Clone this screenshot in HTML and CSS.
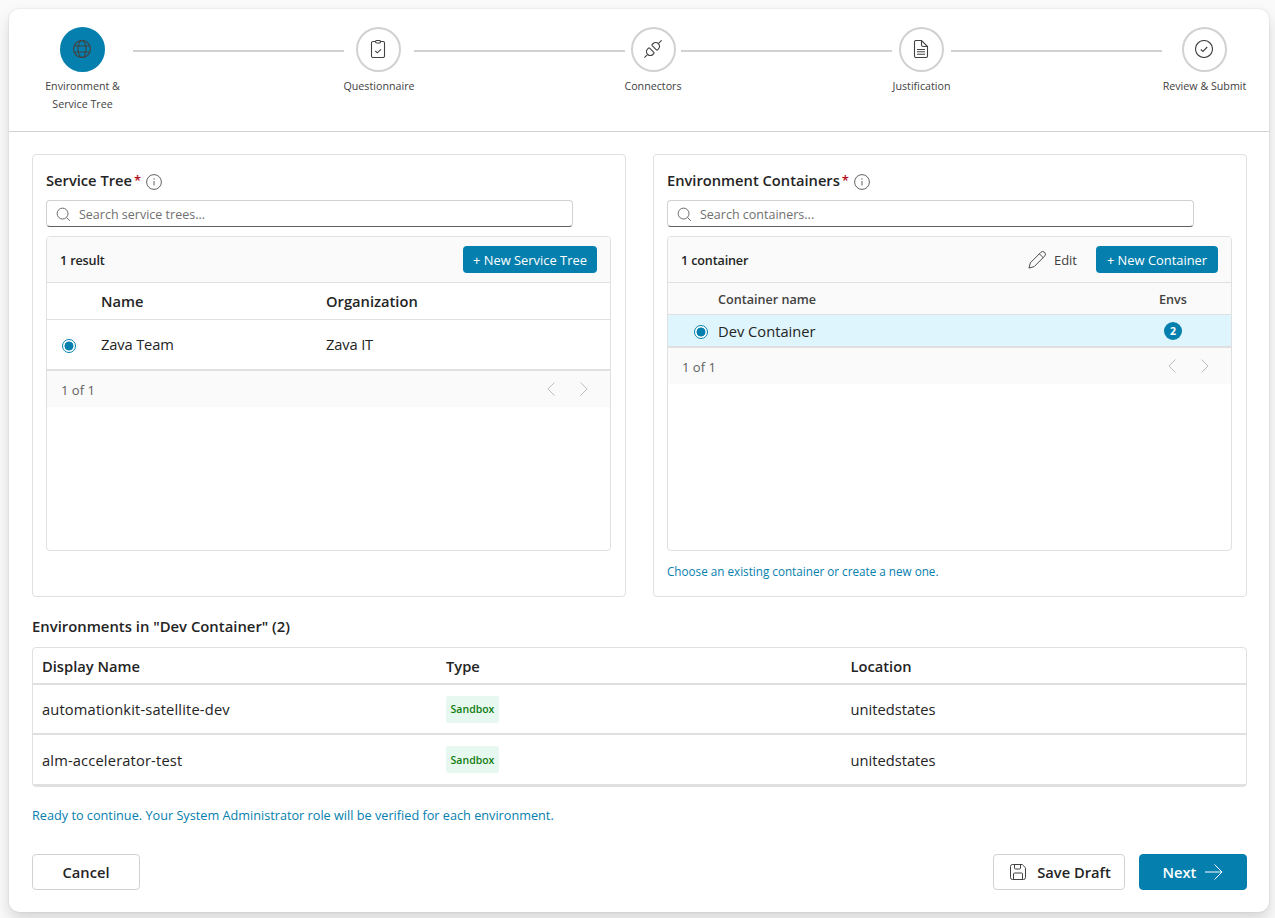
FILE: index.html
```html
<!DOCTYPE html>
<html lang="en">
<head>
    <meta charset="UTF-8">
    <title>Environment &amp; Service Tree</title>
    <link rel="stylesheet" href="styles.css">
</head>
<body>
    <div id="page-container">
        <div class="stepper">
            <div class="step step-environment active">
                <div class="circle">
                    <svg class="icon" viewBox="0 0 18 18"><circle cx="9" cy="9" r="8.5"/><ellipse cx="9" cy="9" rx="4" ry="8.5"/><path d="M1 6h16M1 12h16"/></svg>
                </div>
                <div class="step-label">Environment &amp;<br>Service Tree</div>
            </div>
            <div class="line"></div>
            <div class="step step-questionnaire">
                <div class="circle">
                    <svg class="icon" viewBox="0 0 18 18"><path d="M6.5 1.500H4A1.500 1.500 0 0 0 2.500 3v13A1.500 1.500 0 0 0 4 17.500h10a1.500 1.500 0 0 0 1.500-1.500V3A1.500 1.500 0 0 0 14 1.500h-2.500"/><rect x="6.500" y=".5" width="5" height="2.500" rx="1.200"/><path d="M6.300 11l2 1.800L12 9.300"/></svg>
                </div>
                <div class="step-label">Questionnaire</div>
            </div>
            <div class="line"></div>
            <div class="step step-connectors">
                <div class="circle">
                    <svg class="icon" viewBox="0 0 18 18"><path d="M.4 17.600L3.200 14.800M14.800 3.200L17.600.4M4.500 8.200a.8.8 0 0 1 1.100 0l4.200 4.200a.8.8 0 0 1 0 1.100l-1 1a3.500 3.500 0 0 1-5 0l-.3-.3a3.500 3.500 0 0 1 0-5zM8.200 4.500a.8.8 0 0 0 0 1.100l4.200 4.200a.8.8 0 0 0 1.100 0l1-1a3.500 3.500 0 0 0 0-5l-.3-.3a3.500 3.500 0 0 0-5 0z"/></svg>
                </div>
                <div class="step-label">Connectors</div>
            </div>
            <div class="line"></div>
            <div class="step step-justification">
                <div class="circle">
                    <svg class="icon" viewBox="0 0 18 18"><path d="M9.500.5H4A1.500 1.500 0 0 0 2.500 2v14A1.500 1.500 0 0 0 4 17.500h10a1.500 1.500 0 0 0 1.500-1.500V6.500zM9.500.5V5A1.500 1.500 0 0 0 11 6.500h4.500M5 9.500h8M5 11.800h8M5 14.200h8"/></svg>
                </div>
                <div class="step-label">Justification</div>
            </div>
            <div class="line"></div>
            <div class="step step-review">
                <div class="circle">
                    <svg class="icon" viewBox="0 0 18 18"><circle cx="9" cy="9" r="8.500"/><path d="M5.800 9.500l2.200 2 4.200-4.500"/></svg>
                </div>
                <div class="step-label">Review &amp; Submit</div>
            </div>
        </div>

        <div class="content">
            <div class="panels">
                <div class="panel">
                    <div class="panel-title">
                        <span>Service Tree</span><span class="required">*</span>
                        <svg class="info" viewBox="0 0 16 16"><circle cx="8" cy="8" r="7.400"/><path d="M8 7v4.500"/><path d="M8 4.300v1.400"/></svg>
                    </div>
                    <div class="search">
                        <svg viewBox="0 0 16 16"><circle cx="7" cy="7" r="5.800"/><path d="M11.200 11.200l3.600 3.600"/></svg>
                        <span>Search service trees...</span>
                    </div>
                    <div class="box">
                        <div class="toolbar">
                            <span class="count">1 result</span>
                            <button class="small-button new-tree">+ New Service Tree</button>
                        </div>
                        <div class="tree-row tree-head">
                            <span></span><span>Name</span><span>Organization</span>
                        </div>
                        <div class="tree-row tree-item">
                            <span class="radio"></span><span>Zava Team</span><span>Zava IT</span>
                        </div>
                        <div class="pager">
                            <span>1 of 1</span>
                            <div class="arrows">
                                <svg viewBox="0 0 8 14"><path d="M7.500.5L1 7l6.500 6.500"/></svg>
                                <svg viewBox="0 0 8 14"><path d="M.5.5L7 7 .5 13.500"/></svg>
                            </div>
                        </div>
                    </div>
                </div>

                <div class="panel">
                    <div class="panel-title">
                        <span>Environment Containers</span><span class="required">*</span>
                        <svg class="info" viewBox="0 0 16 16"><circle cx="8" cy="8" r="7.400"/><path d="M8 7v4.500"/><path d="M8 4.300v1.400"/></svg>
                    </div>
                    <div class="search">
                        <svg viewBox="0 0 16 16"><circle cx="7" cy="7" r="5.800"/><path d="M11.200 11.200l3.600 3.600"/></svg>
                        <span>Search containers...</span>
                    </div>
                    <div class="box">
                        <div class="toolbar">
                            <span class="count">1 container</span>
                            <div class="edit">
                                <svg viewBox="0 0 20 20"><path d="M13.500 2.500a2.800 2.800 0 0 1 4 4L6.500 17.500 1 19l1.500-5.500zM12 4l4 4"/></svg>
                                <span>Edit</span>
                            </div>
                            <button class="small-button new-container">+ New Container</button>
                        </div>
                        <div class="container-row container-head">
                            <span></span><span>Container name</span><span class="envs">Envs</span>
                        </div>
                        <div class="container-row container-item">
                            <span class="radio"></span><span>Dev Container</span><span class="badge">2</span>
                        </div>
                        <div class="pager">
                            <span>1 of 1</span>
                            <div class="arrows">
                                <svg viewBox="0 0 8 14"><path d="M7.500.5L1 7l6.500 6.500"/></svg>
                                <svg viewBox="0 0 8 14"><path d="M.5.5L7 7 .5 13.500"/></svg>
                            </div>
                        </div>
                    </div>
                    <div class="hint">Choose an existing container or create a new one.</div>
                </div>
            </div>

            <div class="env-title">Environments in "Dev Container" (2)</div>
            <div class="env-table">
                <div class="env-row env-head">
                    <span>Display Name</span><span>Type</span><span>Location</span>
                </div>
                <div class="env-row">
                    <span class="env-name">automationkit-satellite-dev</span><span class="tag">Sandbox</span><span>unitedstates</span>
                </div>
                <div class="env-row">
                    <span class="env-name">alm-accelerator-test</span><span class="tag">Sandbox</span><span>unitedstates</span>
                </div>
            </div>

            <div class="message">Ready to continue. Your System Administrator role will be verified for each environment.</div>

            <div class="buttons">
                <button class="button cancel">Cancel</button>
                <button class="button save">
                    <svg viewBox="0 0 16 16"><path d="M2.500.5h9.700l3.300 3.300v9.700a2 2 0 0 1-2 2h-11a2 2 0 0 1-2-2v-11a2 2 0 0 1 2-2zM4.500.5v3.500a1 1 0 0 0 1 1h4a1 1 0 0 0 1-1V.5M3.500 15.500V10a1 1 0 0 1 1-1h7a1 1 0 0 1 1 1v5.500"/></svg>
                    <span>Save Draft</span>
                </button>
                <button class="button next">
                    <span>Next</span>
                    <svg viewBox="0 0 18 18"><path d="M0 9h17M9.500 1.500L17 9l-7.500 7.500"/></svg>
                </button>
            </div>
        </div>
    </div>
</body>
</html>
```
FILE: styles.css
```css
* {
    box-sizing: border-box;
}

body {
    margin: 0;
    padding: 9px 6px 6px 9px;
    background-color: #fafafa;
    font-family: "Open Sans", "Noto Sans", sans-serif;
    font-size: 14.7px;
    line-height: 20px;
    color: #242424;
    overflow: hidden;
}

svg {
    fill: none;
    stroke: #424242;
    flex: none;
}

button {
    font-family: inherit;
    padding: 0;
    white-space: nowrap;
}

#page-container {
    height: 903px;
    background-color: white;
    border-radius: 10px;
    box-shadow: 0 0 2px rgba(0, 0, 0, 0.14), 0 8px 16px rgba(0, 0, 0, 0.14);
}

/* steps */
.stepper {
    display: flex;
    height: 123px;
    padding: 18px 22px 0 23px;
    border-bottom: 1px solid #d1d1d1;
}

.step {
    display: flex;
    flex-direction: column;
    align-items: center;
    white-space: nowrap;
}

.step-environment {
    width: 101px;
}

.step-questionnaire {
    width: 70px;
}

.step-questionnaire .circle {
    margin-right: 1px;
}

.step-connectors {
    width: 56px;
}

.step-justification {
    width: 59px;
}

.step-review {
    width: 85px;
}

.line {
    flex: 1;
    height: 2px;
    margin-top: 23px;
    background-color: #d1d1d1;
}

.circle {
    display: flex;
    align-items: center;
    justify-content: center;
    width: 45px;
    height: 45px;
    border: 2px solid #d1d1d1;
    border-radius: 50%;
}

.active .circle {
    background-color: #0580ae;
    border-color: #0580ae;
}

.icon {
    width: 18px;
    height: 18px;
    margin: 0 1px 1px 0;
    stroke-width: 1.1;
}

.step-label {
    margin-top: 5px;
    font-size: 10.7px;
    line-height: 18px;
    text-align: center;
    color: #424242;
}

/* panels */
.content {
    padding: 22px 22px 0 23px;
}

.panels {
    display: grid;
    grid-template-columns: 1fr 1fr;
    gap: 27px;
}

.panel {
    height: 443px;
    padding: 15px 14px 0 13px;
    border: 1px solid #e0e0e0;
    border-radius: 4px;
}

.panel-title {
    display: flex;
    align-items: center;
    height: 20px;
    font-weight: 600;
}

.required {
    width: 6px;
    margin-left: 2px;
    font-size: 13px;
    color: #b10e1c;
}

.info {
    width: 16px;
    height: 16px;
    margin: 4px 0 0 6px;
    stroke: #616161;
}

.search {
    display: flex;
    align-items: center;
    gap: 8px;
    width: 527px;
    height: 27px;
    margin-top: 10px;
    padding: 2px 9px 0;
    border: 1px solid #d1d1d1;
    border-bottom-color: #616161;
    border-radius: 4px;
    font-size: 12.5px;
    color: #707070;
}

.search span {
    padding-top: 1px;
}

.search svg {
    width: 15px;
    height: 15px;
    margin-top: -1px;
    stroke: #616161;
}

.box {
    height: 315px;
    margin-top: 9px;
    border: 1px solid #e0e0e0;
    border-radius: 4px;
    overflow: hidden;
}

.toolbar {
    display: flex;
    align-items: center;
    height: 46px;
    padding: 0 13px;
    background-color: #fafafa;
    border-bottom: 1px solid #e0e0e0;
}

.count {
    flex: 1;
    padding-top: 2px;
    font-size: 12.6px;
    font-weight: 600;
    letter-spacing: -0.15px;
}

.small-button {
    height: 27px;
    border: none;
    border-radius: 4px;
    background-color: #0580ae;
    color: white;
    font-size: 12.9px;
}

.new-tree {
    width: 134px;
}

.new-container {
    width: 122px;
}

.edit {
    display: flex;
    align-items: center;
    gap: 7px;
    margin-right: 19px;
    font-size: 13px;
    color: #424242;
}

.edit svg {
    width: 19px;
    height: 19px;
}

.tree-row {
    display: grid;
    grid-template-columns: 39px 225px 1fr;
    align-items: center;
    padding-left: 15px;
}

.tree-head {
    height: 37px;
    padding-bottom: 1px;
    border-bottom: 1px solid #e0e0e0;
    font-weight: 600;
}

.tree-item {
    height: 51px;
    padding-bottom: 2px;
    border-bottom: 2px solid #e0e0e0;
    letter-spacing: -0.15px;
}

.radio {
    width: 14px;
    height: 14px;
    border: 1px solid #0580ae;
    border-radius: 50%;
    background: radial-gradient(circle, #0580ae 4.2px, white 4.8px);
}

.tree-item .radio {
    margin-top: 5px;
}

.container-row {
    display: grid;
    grid-template-columns: 24px 1fr 60px;
    align-items: center;
    padding: 0 28px 0 26px;
}

.container-head {
    height: 32px;
    padding-top: 2px;
    background-color: #fafafa;
    border-bottom: 1px solid #e0e0e0;
    font-size: 12.6px;
    font-weight: 600;
    color: #424242;
}

.container-item {
    height: 33px;
    padding-top: 1px;
    background-color: #def5fe;
    border-bottom: 2px solid #e0e0e0;
}

.container-item .radio {
    margin-top: 2px;
}

.envs {
    text-align: center;
}

.badge {
    justify-self: center;
    width: 18px;
    height: 18px;
    border-radius: 50%;
    background-color: #0580ae;
    color: white;
    font-size: 10.5px;
    font-weight: 700;
    line-height: 18px;
    text-align: center;
}

.pager {
    display: flex;
    align-items: center;
    justify-content: space-between;
    height: 36px;
    padding: 2px 22px 0 14px;
    background-color: #fafafa;
    font-size: 13px;
    color: #616161;
}

.arrows {
    display: flex;
    gap: 25px;
}

.arrows svg {
    width: 8px;
    height: 14px;
    margin-top: -3px;
    stroke: #bdbdbd;
}

.hint {
    margin-top: 10px;
    font-size: 11.7px;
    color: #0580ae;
}

/* environments */
.env-title {
    margin-top: 19px;
    font-size: 14.85px;
    font-weight: 600;
}

.env-table {
    height: 140px;
    margin-top: 11px;
    border: 1px solid #e0e0e0;
    border-radius: 4px;
}

.env-row {
    display: grid;
    grid-template-columns: 404px 404.5px 1fr;
    align-items: center;
    height: 50px;
    padding-left: 9px;
    border-bottom: 2px solid #e0e0e0;
}

.env-head {
    height: 37px;
    padding-top: 1px;
    font-weight: 600;
}

.env-row:last-child {
    height: 51px;
    padding-top: 1px;
}

.env-name {
    letter-spacing: 0.15px;
}

.tag {
    justify-self: start;
    width: 53px;
    height: 27px;
    border-radius: 2px;
    background-color: #e7f8f1;
    color: #107c10;
    font-size: 10.5px;
    font-weight: 600;
    line-height: 26px;
    text-align: center;
}

.env-row:last-child .tag {
    margin-top: -2px;
    line-height: 28px;
}

.message {
    margin-top: 18px;
    font-size: 12.7px;
    color: #0580ae;
}

.buttons {
    display: flex;
    gap: 14px;
    margin-top: 29px;
}

.button {
    display: flex;
    align-items: center;
    justify-content: center;
    height: 36px;
    border: 1px solid #d1d1d1;
    border-radius: 4px;
    background-color: white;
    color: #242424;
    font-size: 14.7px;
    font-weight: 600;
}

.cancel {
    width: 108px;
    margin-right: auto;
}

.save {
    width: 132px;
    gap: 11px;
    padding-left: 3px;
}

.save svg {
    width: 16px;
    height: 16px;
}

.next {
    width: 108px;
    gap: 9px;
    border-color: #0580ae;
    background-color: #0580ae;
    color: white;
}

.next svg {
    width: 18px;
    height: 18px;
    stroke: white;
}
```
